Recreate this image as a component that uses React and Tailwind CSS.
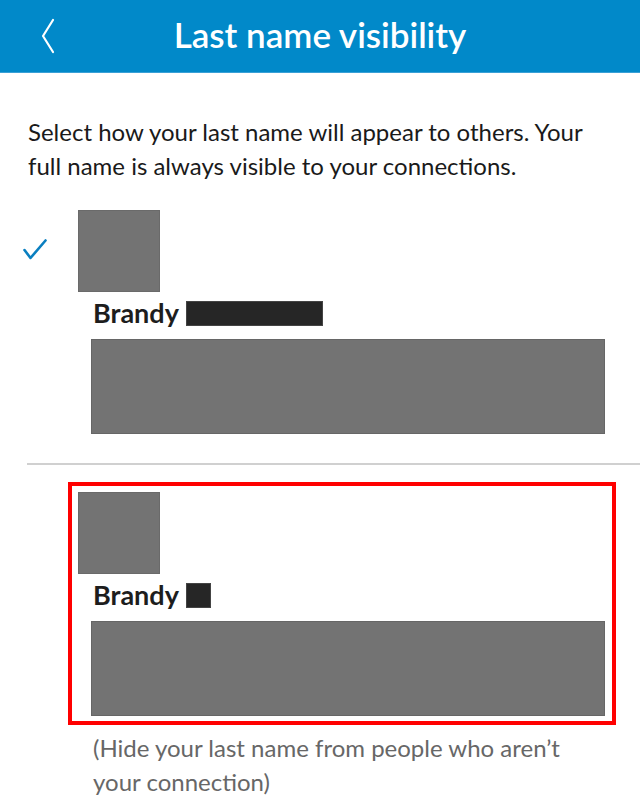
import React from 'react'

const font = { fontFamily: 'Lato, "Noto Sans", sans-serif' }

const BackIcon = () => (
  <svg width="16" height="36" viewBox="0 0 16 36" fill="none" stroke="white" strokeWidth="2.2" strokeLinecap="round" strokeLinejoin="round">
    <path d="M13 2 L3 18 L13 34" />
  </svg>
)

const CheckIcon = () => (
  <svg width="24" height="21" viewBox="0 0 24 21" fill="none" stroke="#0a7fc0" strokeWidth="2.6" strokeLinecap="round" strokeLinejoin="round">
    <path d="M1.5 11 L7.5 19 L22.5 1.5" />
  </svg>
)

const Option = ({ nameBlock, selected, highlight }) => (
  <div className="flex">
    <div className="w-[68px] shrink-0 pl-[23px] pt-[39px]">
      {selected && <CheckIcon />}
    </div>
    <div className={highlight ? 'border-4 border-[#ff0000] w-[548px] pt-[6px] pb-[5px]' : 'w-[548px] pt-[10px] pb-[10px]'}>
      <div className={highlight ? 'ml-[6px]' : 'ml-[10px]'}>
        <div className="w-[82px] h-[82px] bg-[#737373] border border-[#6a6a6a]" />
      </div>
      <div className={highlight ? 'ml-[21px] mt-[5px] h-[32px] flex items-center gap-[7px]' : 'ml-[25px] mt-[5px] h-[32px] flex items-center gap-[7px]'}>
        <span className="text-[27px] font-bold text-[#1d1d1d] leading-[32px]">Brandy</span>
        {nameBlock}
      </div>
      <div className={highlight ? 'ml-[19px] mt-[10px] w-[514px] h-[95px] bg-[#737373] border border-[#666]' : 'ml-[23px] mt-[10px] w-[514px] h-[95px] bg-[#737373] border border-[#666]'} />
    </div>
  </div>
)

export default function App() {
  return (
    <div className="w-[640px] h-[810px] bg-white overflow-hidden" style={font}>
      <header className="h-[73px] bg-[#0189c9] border-b border-[#3aa0d6] flex items-center relative">
        <div className="absolute left-[40px] top-[18px]">
          <BackIcon />
        </div>
        <h1 className="w-full text-center text-white text-[35px] font-semibold pb-[3px]">Last name visibility</h1>
      </header>

      <p className="pl-[28px] pr-[30px] pt-[42px] text-[24px] leading-[34px] text-[#1a1a1a]">
        Select how your last name will appear to others. Your full name is always visible to your connections.
      </p>

      <div className="mt-[17px]">
        <Option selected nameBlock={<div className="w-[137px] h-[25px] bg-[#262626] border border-[#444]" />} />
      </div>

      <div className="ml-[27px] mt-[19px] h-[2px] bg-[#d0d0d0]" />

      <div className="mt-[17px]">
        <Option highlight nameBlock={<div className="w-[25px] h-[25px] bg-[#262626] border border-[#444]" />} />
      </div>

      <p className="pl-[93px] pr-[60px] mt-[6px] text-[24px] leading-[34px] text-[#676767]">
        (Hide your last name from people who aren’t your connection)
      </p>
    </div>
  )
}
